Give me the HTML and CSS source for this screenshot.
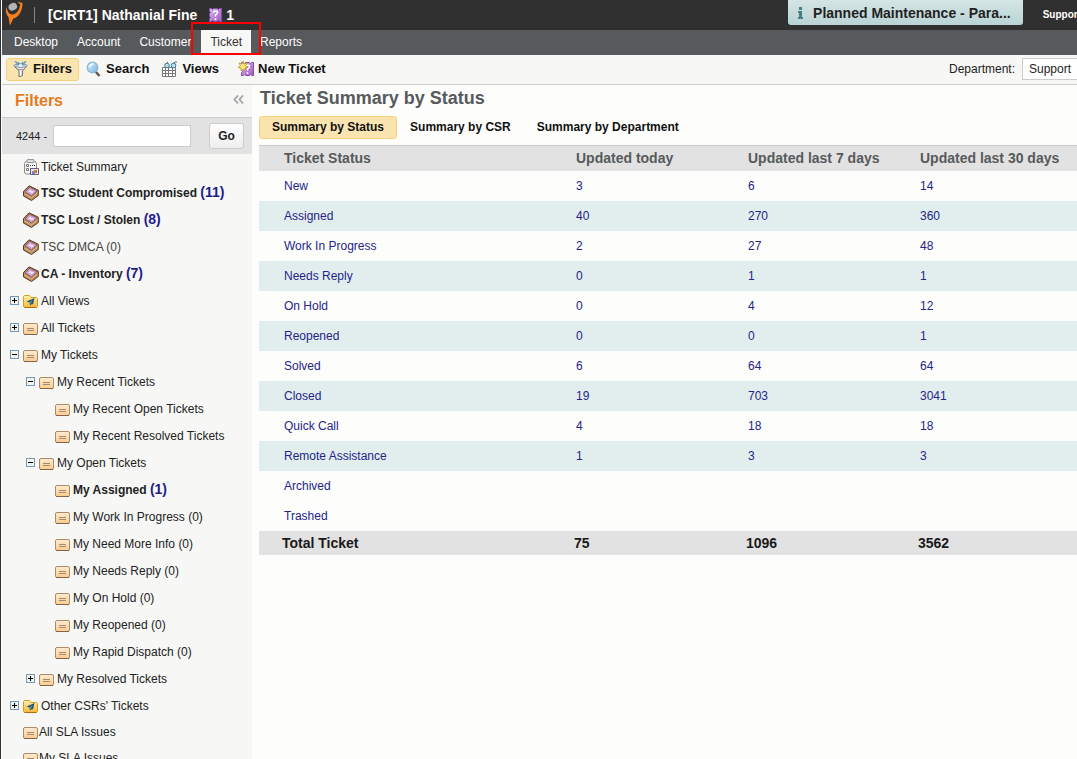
FILE: index.html
```
<!DOCTYPE html>
<html lang="en">
<head>
<meta charset="utf-8">
<title>Ticket Summary by Status</title>
<link rel="stylesheet" href="styles.css">
</head>
<body>
<svg class="defs" width="0" height="0" aria-hidden="true">
  <defs>
    <linearGradient id="peach" x1="0" y1="0" x2="0" y2="1"><stop offset="0" stop-color="#ffecd2"/><stop offset="1" stop-color="#fbcb8c"/></linearGradient>
    <linearGradient id="gold" x1="0" y1="0" x2="0" y2="1"><stop offset="0" stop-color="#fff0a8"/><stop offset="1" stop-color="#fbb73d"/></linearGradient>
    <linearGradient id="lens" x1="0" y1="0" x2="1" y2="1"><stop offset="0" stop-color="#e4f6ff"/><stop offset="1" stop-color="#69b2e6"/></linearGradient>
    <linearGradient id="violet" x1="0" y1="0" x2="1" y2="1"><stop offset="0" stop-color="#d9b5ee"/><stop offset="1" stop-color="#9b5bc0"/></linearGradient>
  </defs>
  <symbol id="i-ticket" viewBox="0 0 16 16">
    <rect x=".5" y="3.500" width="14" height="11" rx="1.500" fill="url(#peach)" stroke="#ae8b68"/>
    <path d="M1 14.500h13" stroke="#80664e"/><path d="M4 8.500h7M4 10.500h7" stroke="#a18b73"/>
  </symbol>
  <symbol id="i-folder" viewBox="0 0 16 16">
    <path d="M.5 13.500v-10l1-1h5l1.500 2h5.500l1 1v8l-1 1h-12z" fill="url(#gold)" stroke="#d99b28"/>
    <path d="M1.500 14.500h12" stroke="#b16d0c"/>
    <path d="M11.500 5 3.500 8.500l3 1 .5 3 2-1.500 1 .5z" fill="#24576e"/><path d="m6.500 9.500 3-2.500-2 4" fill="#7ba4aa"/>
  </symbol>
  <symbol id="i-inbox" viewBox="0 0 16 16">
    <path d="M.5 6.500 6 .8l9.300 4.400v5.300L8.500 15.500.5 11z" fill="#b98a5f" stroke="#5b3821"/>
    <path d="m2 7 4.500-4.800L14 5.800 8.500 11z" fill="#c9a0dc" stroke="#80533d" stroke-width=".8"/>
    <path d="m5 6.800 2.500-2.600.6 1.600 3.200.4-2.500 2.600-1-1z" fill="#efe0f7"/>
    <path d="m1.500 9 7 4 6-5" fill="none" stroke="#e1bc89"/>
  </symbol>
  <symbol id="i-summary" viewBox="0 0 16 16">
    <rect x="1.500" y="2.500" width="12" height="12.500" rx="2" fill="#f5f5f5" stroke="#8b8b8b"/>
    <path d="M4 3.500V1.500q0-1 1-1h5q1 0 1 1v2z" fill="#ddd" stroke="#999"/>
    <path d="M3.500 5.500h2v2h-2zm0 4h2v2h-2z" fill="#fff" stroke="#777"/><path d="M7 6.500h1m1 0h1m1 0h1M7 9.500h3" stroke="#333"/>
    <path d="M7.500 9.500h8v6h-8z" fill="#e9e3f0" stroke="#65617f"/><path d="M9 12h3v3H9z" fill="#7588bd"/><path d="M11 11h3v3h-3z" fill="#ce7c38"/>
  </symbol>
  <symbol id="i-plus" viewBox="0 0 9 9"><rect x=".5" y=".5" width="8" height="8" fill="#f5f3ee" stroke="#7898b5"/><path d="M2 4.500h5M4.500 2v5" stroke="#000"/></symbol>
  <symbol id="i-minus" viewBox="0 0 9 9"><rect x=".5" y=".5" width="8" height="8" fill="#f5f3ee" stroke="#7898b5"/><path d="M2 4.500h5" stroke="#000"/></symbol>
  <symbol id="i-query" viewBox="0 0 13 16">
    <path d="M.5 1.500h2l1 1 1-1h4l1 1 1-1h2v13h-2l-1-1-1 1h-4l-1-1-1 1h-2v-3l1-1-1-1v-3l1-1-1-1z" fill="url(#violet)" stroke="#8a4caa"/>
    <path d="M4.500 6q0-2 2-2t2 1.500q0 1-2 2.500v1.500M6.500 11v2" fill="none" stroke="#fff" stroke-width="1.400"/>
  </symbol>
</svg>

<header class="masthead">
  <svg class="logo" viewBox="0 0 20 26" width="20" height="26" aria-hidden="true">
    <path d="M1.500 6.500C.2 11 1 14.500 3.500 17l1.500 8.500L8.300 18.500C13 17.500 17.500 12 17.500 3l-5-1.500 2.600 2.700C15 9.500 11.500 14 7.500 14.500 4 14.500 2 11 1.500 6.500z" fill="#f8801a"/>
    <ellipse cx="7.800" cy="6.800" rx="4.400" ry="3.600" transform="rotate(-25 7.800 6.800)" fill="#b2b4b6"/>
  </svg>
  <span class="divider"></span>
  <strong class="user">[CIRT1] Nathanial Fine</strong>
  <a class="alerts" href="#"><svg width="13" height="16" aria-hidden="true"><use href="#i-query"/></svg>1</a>
  <a class="notice" href="#"><svg width="5" height="12" viewBox="0 0 5 12" aria-hidden="true"><path d="M1 0h3v3H1zM0 4h4v6h1v2H0v-2h1V6H0z" fill="#488087"/></svg>Planned Maintenance - Para...</a>
  <a class="support" href="#">Support</a>
</header>

<nav class="nav">
  <a href="#">Desktop</a>
  <a href="#">Account</a>
  <a href="#">Customer</a>
  <a class="current" href="#">Ticket</a>
  <a href="#">Reports</a>
</nav>

<div class="toolbar">
  <button class="tool on"><svg width="16" height="16" viewBox="0 0 16 16" aria-hidden="true">
    <path d="M1 5h13l-4.500 5v4.500L6 16v-6z" fill="#e4e4e4" stroke="#777"/><path d="M7.500 10.500v4" stroke="#fff"/>
    <ellipse cx="7.500" cy="4.500" rx="6.500" ry="1.800" fill="#f5fafd" stroke="#838b91"/><path d="m2 0 3 3M5.500 1v3H2.500M13 0l-3 3M9.500 1v3h3" fill="none" stroke="#5598cb" stroke-width="1.200"/><path d="M4.500 8.500h6" stroke="#999"/></svg>Filters</button>
  <button class="tool"><svg width="16" height="16" viewBox="0 0 16 16" aria-hidden="true">
    <path d="m9.500 10.500 4 4.500" stroke="#66564b" stroke-width="2.500"/><circle cx="6.500" cy="6.500" r="5.200" fill="url(#lens)" stroke="#91b8d3" stroke-width="1.400"/><path d="M3.500 6q1-3 4-3" fill="none" stroke="#fff" stroke-width="1.500"/></svg>Search</button>
  <button class="tool views"><svg width="16" height="16" viewBox="0 0 16 16" aria-hidden="true">
    <path d="M.5 6.500h13v9H.5zM.5 9.500h13m-13 3h13M3.500 6v9m3-9v9m4-9v9" fill="#fff" stroke="#777"/>
    <path d="m3 4 3-3m3 3 4-3h2" fill="none" stroke="#506f83"/><circle cx="5" cy="4.500" r="2.300" fill="#b9e1f1" stroke="#48798f"/><circle cx="11.500" cy="4.500" r="2.300" fill="#b9e1f1" stroke="#48798f"/></svg>Views</button>
  <button class="tool new"><svg width="16" height="16" viewBox="0 0 16 16" aria-hidden="true">
    <svg x="3" y="0" width="13" height="16"><use href="#i-query"/></svg><path d="m5 0 1 3 3-1-1.500 3L10 6.500l-3 .5v3L5 8l-2 2V7L0 6.500 2.500 5 1 2l3 1z" fill="#ffe674" stroke="#b48a22" stroke-width=".7"/></svg>New Ticket</button>
  <div class="department">
    <label for="dept">Department:</label>
    <select id="dept"><option>Support</option></select>
  </div>
</div>

<div class="workspace">
  <aside class="sidebar">
    <div class="side-head">
      <h2>Filters</h2>
      <button class="collapse" aria-label="Collapse"><svg width="11" height="9" viewBox="0 0 11 9" aria-hidden="true"><path d="M5 .5 1.500 4.500 5 8.500M10 .5 6.500 4.500 10 8.500" fill="none" stroke="#a2a4a6" stroke-width="1.800"/></svg></button>
    </div>
    <form class="lookup">
      <label for="num">4244 -</label>
      <input id="num" type="text">
      <button type="button">Go</button>
    </form>
    <ul class="tree">
      <li class="first"><span class="toggle"></span><svg class="icon"><use href="#i-summary"/></svg><a href="#">Ticket Summary</a></li>
      <li class="hot"><span class="toggle"></span><svg class="icon"><use href="#i-inbox"/></svg><a href="#">TSC Student Compromised <b>(11)</b></a></li>
      <li class="hot"><span class="toggle"></span><svg class="icon"><use href="#i-inbox"/></svg><a href="#">TSC Lost / Stolen <b>(8)</b></a></li>
      <li><span class="toggle"></span><svg class="icon"><use href="#i-inbox"/></svg><a class="soft" href="#">TSC DMCA (0)</a></li>
      <li class="hot"><span class="toggle"></span><svg class="icon"><use href="#i-inbox"/></svg><a href="#">CA - Inventory <b>(7)</b></a></li>
      <li><svg class="toggle"><use href="#i-plus"/></svg><svg class="icon"><use href="#i-folder"/></svg><a href="#">All Views</a></li>
      <li><svg class="toggle"><use href="#i-plus"/></svg><svg class="icon"><use href="#i-ticket"/></svg><a href="#">All Tickets</a></li>
      <li><svg class="toggle"><use href="#i-minus"/></svg><svg class="icon"><use href="#i-ticket"/></svg><a href="#">My Tickets</a></li>
      <li class="l2"><svg class="toggle"><use href="#i-minus"/></svg><svg class="icon"><use href="#i-ticket"/></svg><a href="#">My Recent Tickets</a></li>
      <li class="l3"><span class="toggle"></span><svg class="icon"><use href="#i-ticket"/></svg><a href="#">My Recent Open Tickets</a></li>
      <li class="l3"><span class="toggle"></span><svg class="icon"><use href="#i-ticket"/></svg><a href="#">My Recent Resolved Tickets</a></li>
      <li class="l2"><svg class="toggle"><use href="#i-minus"/></svg><svg class="icon"><use href="#i-ticket"/></svg><a href="#">My Open Tickets</a></li>
      <li class="l3 hot"><span class="toggle"></span><svg class="icon"><use href="#i-ticket"/></svg><a href="#">My Assigned <b>(1)</b></a></li>
      <li class="l3"><span class="toggle"></span><svg class="icon"><use href="#i-ticket"/></svg><a href="#">My Work In Progress (0)</a></li>
      <li class="l3"><span class="toggle"></span><svg class="icon"><use href="#i-ticket"/></svg><a href="#">My Need More Info (0)</a></li>
      <li class="l3"><span class="toggle"></span><svg class="icon"><use href="#i-ticket"/></svg><a href="#">My Needs Reply (0)</a></li>
      <li class="l3"><span class="toggle"></span><svg class="icon"><use href="#i-ticket"/></svg><a href="#">My On Hold (0)</a></li>
      <li class="l3"><span class="toggle"></span><svg class="icon"><use href="#i-ticket"/></svg><a href="#">My Reopened (0)</a></li>
      <li class="l3"><span class="toggle"></span><svg class="icon"><use href="#i-ticket"/></svg><a href="#">My Rapid Dispatch (0)</a></li>
      <li class="l2"><svg class="toggle"><use href="#i-plus"/></svg><svg class="icon"><use href="#i-ticket"/></svg><a href="#">My Resolved Tickets</a></li>
      <li><svg class="toggle"><use href="#i-plus"/></svg><svg class="icon"><use href="#i-folder"/></svg><a href="#">Other CSRs' Tickets</a></li>
      <li class="sla"><span class="toggle"></span><svg class="icon"><use href="#i-ticket"/></svg><a href="#">All SLA Issues</a></li>
      <li class="sla"><span class="toggle"></span><svg class="icon"><use href="#i-ticket"/></svg><a href="#">My SLA Issues</a></li>
    </ul>
  </aside>

  <main class="main">
    <h1>Ticket Summary by Status</h1>
    <div class="tabs">
      <button class="on">Summary by Status</button>
      <button>Summary by CSR</button>
      <button>Summary by Department</button>
    </div>
    <table class="summary">
      <colgroup><col class="c-name"><col class="c-num"><col class="c-num"><col></colgroup>
      <thead><tr><th>Ticket Status</th><th>Updated today</th><th>Updated last 7 days</th><th>Updated last 30 days</th></tr></thead>
      <tbody>
        <tr><td><a href="#">New</a></td><td><a href="#">3</a></td><td><a href="#">6</a></td><td><a href="#">14</a></td></tr>
        <tr><td><a href="#">Assigned</a></td><td><a href="#">40</a></td><td><a href="#">270</a></td><td><a href="#">360</a></td></tr>
        <tr><td><a href="#">Work In Progress</a></td><td><a href="#">2</a></td><td><a href="#">27</a></td><td><a href="#">48</a></td></tr>
        <tr><td><a href="#">Needs Reply</a></td><td><a href="#">0</a></td><td><a href="#">1</a></td><td><a href="#">1</a></td></tr>
        <tr><td><a href="#">On Hold</a></td><td><a href="#">0</a></td><td><a href="#">4</a></td><td><a href="#">12</a></td></tr>
        <tr><td><a href="#">Reopened</a></td><td><a href="#">0</a></td><td><a href="#">0</a></td><td><a href="#">1</a></td></tr>
        <tr><td><a href="#">Solved</a></td><td><a href="#">6</a></td><td><a href="#">64</a></td><td><a href="#">64</a></td></tr>
        <tr><td><a href="#">Closed</a></td><td><a href="#">19</a></td><td><a href="#">703</a></td><td><a href="#">3041</a></td></tr>
        <tr><td><a href="#">Quick Call</a></td><td><a href="#">4</a></td><td><a href="#">18</a></td><td><a href="#">18</a></td></tr>
        <tr><td><a href="#">Remote Assistance</a></td><td><a href="#">1</a></td><td><a href="#">3</a></td><td><a href="#">3</a></td></tr>
        <tr><td><a href="#">Archived</a></td><td></td><td></td><td></td></tr>
        <tr class="plain"><td><a href="#">Trashed</a></td><td></td><td></td><td></td></tr>
      </tbody>
      <tfoot><tr><td>Total Ticket</td><td>75</td><td>1096</td><td>3562</td></tr></tfoot>
    </table>
  </main>
</div>
<div class="marker"></div>
</body>
</html>
```
FILE: styles.css
```
* { box-sizing: border-box; }
body {
  margin: 0;
  height: 100vh;
  overflow: hidden;
  display: flex;
  flex-direction: column;
  position: relative;
  border-left: 1px solid #333;
  padding-left: 1px;
  background: #fdfdfb;
  color: #222;
  font: 12px/16px "Liberation Sans", Arial, sans-serif;
}
a { color: inherit; text-decoration: none; }
button, input, select { font: inherit; color: inherit; }
button { cursor: pointer; }
.defs { position: absolute; }

.masthead {
  flex: none;
  display: flex;
  align-items: center;
  height: 30px;
  padding-left: 3px;
  overflow: hidden;
  background: #303030;
  color: #fff;
  font-size: 14px;
  font-weight: bold;
  white-space: nowrap;
}
.logo { flex: none; align-self: flex-start; }
.divider { width: 1px; height: 16px; margin: 0 13px 0 9px; background: #858585; }
.alerts { display: flex; gap: 4px; margin-left: 12px; }
.notice {
  align-self: flex-start;
  display: flex;
  align-items: center;
  gap: 10px;
  height: 25px;
  margin-left: auto;
  padding: 0 12px 0 10px;
  border-radius: 0 0 3px 3px;
  background: linear-gradient(#d5e5e5, #b9d3d4);
  color: #222;
}
.support { margin: 0 -4px 0 20px; font-size: 10px; }

.nav {
  flex: none;
  display: flex;
  align-items: flex-start;
  height: 25px;
  padding-left: 2px;
  background: #565a5c;
  color: #fff;
}
.nav a { padding: 4px 9px; margin-left: 1px; }
.nav a.current { background: #f7f7f5; color: #333; }
.nav a.current + a { margin-left: 0; }

.toolbar {
  flex: none;
  display: flex;
  align-items: center;
  height: 30px;
  padding: 0 0 1px 4px;
  overflow: hidden;
  border-bottom: 1px solid #ccc;
  background: #f7f7f5;
  white-space: nowrap;
}
.tool {
  display: flex;
  align-items: center;
  gap: 4px;
  height: 23px;
  padding: 0 6px;
  border: 1px solid transparent;
  border-radius: 3px;
  background: none;
  font-size: 13px;
  font-weight: bold;
  color: #111;
}
.tool + .tool { padding-right: 5px; }
.tool.new { margin-left: 6px; }
.on { border-color: #f5d27d; background: #fae4b0; }
.department { display: flex; align-items: center; gap: 7px; margin-left: auto; margin-right: -65px; }
.department select {
  width: 120px;
  height: 22px;
  padding: 0 6px;
  border: 1px solid #ccc;
  background: #fff;
  appearance: none;
}

.workspace { flex: 1; display: flex; min-height: 0; }
.sidebar { flex: none; width: 250px; overflow: hidden; background: #f7f7f5; }
.side-head {
  display: flex;
  align-items: center;
  justify-content: space-between;
  height: 33px;
  padding: 0 8px 0 13px;
  border-bottom: 1px solid #ccc;
}
.side-head h2 { margin: 0; font-size: 16px; color: #e57a1b; }
.collapse { display: flex; padding: 0 0 4px; border: 0; background: none; }
.lookup {
  display: flex;
  align-items: center;
  height: 36px;
  padding: 0 8px 0 14px;
  background: #e2e2e2;
  font-size: 11px;
}
.lookup input { width: 138px; height: 22px; margin-left: 6px; border: 1px solid #ccc; background: #fff; }
.lookup button {
  width: 35px;
  height: 26px;
  margin-left: auto;
  padding: 0;
  border: 1px solid #ccc;
  border-radius: 3px;
  background: linear-gradient(#fefefe, #eee);
  font-size: 12px;
  font-weight: bold;
}

.tree { margin: 0; padding: 0 0 0 8px; list-style: none; white-space: nowrap; }
.tree li { display: flex; align-items: center; height: 27px; }
.tree .first { height: 25px; }
.tree .l2 { padding-left: 16px; }
.tree .l3 { padding-left: 32px; }
.toggle { flex: none; width: 9px; height: 9px; margin-right: 4px; }
.icon { flex: none; width: 16px; height: 16px; margin-right: 2px; }
.tree .hot { font-weight: bold; }
.tree .hot b { font-size: 14px; color: #1c1c8c; }
.tree .soft { color: #444; }
.tree .sla { height: 26px; }
.tree .sla .icon { margin-right: 0; }

.main { flex: 1; min-width: 0; padding-left: 7px; }
h1 { margin: 0; padding: 3px 0 7px 1px; font-size: 18px; line-height: 21px; color: #565a5c; }
.tabs { display: flex; margin-bottom: 6px; }
.tabs button {
  height: 23px;
  padding: 0 12px 1px;
  border: 1px solid transparent;
  border-radius: 3px;
  background: none;
  font-size: 12px;
  font-weight: bold;
  color: #111;
}
.tabs .on { border-color: #f5d27d; background: #fae4b0; }

.summary { width: 100%; table-layout: fixed; border-collapse: separate; border-spacing: 0; color: #24248a; }
.c-name { width: 292px; }
.c-num { width: 172px; }
.summary th, .summary td { padding: 0 0 0 25px; text-align: left; white-space: nowrap; }
.summary th {
  height: 26px;
  padding-bottom: 2px;
  border-top: 1px solid #c9c9c9;
  background: #e2e2e2;
  font-size: 14px;
  color: #565a5c;
}
.summary td { height: 30px; }
.summary tbody tr:nth-child(even):not(.plain) { background: #e2eeee; }
.summary tfoot td { height: 24px; padding-left: 23px; background: #e2e2e2; font-size: 14px; font-weight: bold; color: #1a1a1a; }

/* Highlight box lying over the Ticket menu entry */
.marker { position: absolute; left: 190px; top: 22px; width: 70px; height: 33px; border: 2px solid #f00; }
```
